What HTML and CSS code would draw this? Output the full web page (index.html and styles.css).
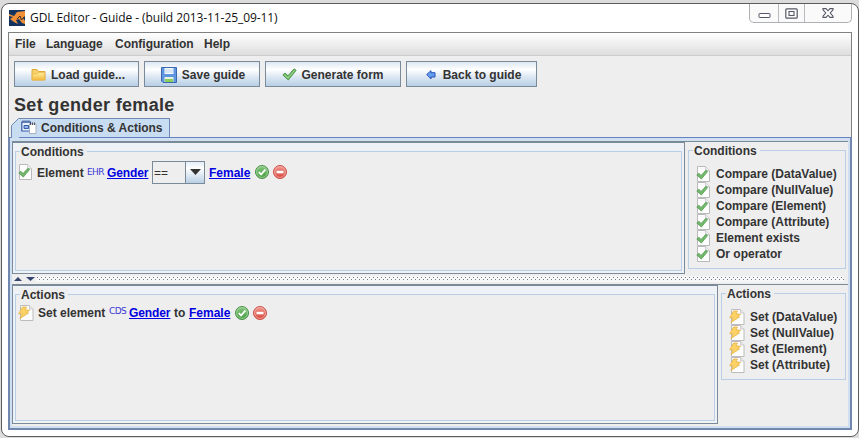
FILE: index.html
```html
<!DOCTYPE html>
<html lang="en">
<head>
<meta charset="utf-8">
<title>GDL Editor</title>
<link rel="stylesheet" href="styles.css">
</head>
<body>
<svg class="defs" width="0" height="0">
  <defs>
    <linearGradient id="green" x1="0" y1="0" x2="0" y2="1"><stop offset="0" stop-color="#8cc983"/><stop offset="1" stop-color="#3f9a3c"/></linearGradient>
    <linearGradient id="red" x1="0" y1="0" x2="0" y2="1"><stop offset="0" stop-color="#f09a90"/><stop offset="1" stop-color="#d8433a"/></linearGradient>
    <linearGradient id="gold" x1="0" y1="0" x2="0" y2="1"><stop offset="0" stop-color="#fff0a0"/><stop offset="1" stop-color="#f3b83a"/></linearGradient>
    <symbol id="page-check" viewBox="0 0 15 16">
      <path d="M1.500.5h8l4 4v11h-12z" fill="#fdfdfd" stroke="#b9b9b9"/><path d="M9.500.5v4h4" fill="#eee" stroke="#ccc"/>
      <path d="M.8 9l2-1.800 2.200 2.300 4.900-5.200 1.700 1.300-6.300 7.500z" fill="#72b86c" stroke="#559a52" stroke-width=".8"/>
    </symbol>
    <symbol id="page-bolt" viewBox="0 0 16 16">
      <path d="M2.500.5h9l3.500 3.500v11.500H2.500z" fill="#fdfdfd" stroke="#bcbcbc"/><path d="M11.500.5v3.500H15" fill="#eee" stroke="#ccc"/>
      <path d="M4.500 2h4L7.200 5h4.300L8.800 8h1.700L2 13.500l2.200-4.700H.7z" fill="#fbd263" stroke="#e3ae3c" stroke-width=".7"/>
    </symbol>
    <symbol id="accept" viewBox="0 0 14 14">
      <circle cx="7" cy="7" r="6.500" fill="url(#green)" stroke="#4b8f49"/><circle cx="7" cy="7" r="5.400" fill="none" stroke="#b5deb0" stroke-width=".7"/>
      <path d="M3.800 7.200l2.300 2.300 4.200-4.800" fill="none" stroke="#fff" stroke-width="1.800"/>
    </symbol>
    <symbol id="remove" viewBox="0 0 14 14">
      <circle cx="7" cy="7" r="6.500" fill="url(#red)" stroke="#ca5148"/><circle cx="7" cy="7" r="5.400" fill="none" stroke="#f6bcb6" stroke-width=".7"/>
      <rect x="3.500" y="5.800" width="7" height="2.500" fill="#fff"/>
    </symbol>
  </defs>
</svg>
<div class="window">
  <header class="titlebar">
    <svg class="app-icon" width="16" height="16" viewBox="0 0 16 16"><path fill="#12325f" d="M0 0h16v16H0z"/><path fill="#f0913a" d="M0 4l5 2 3-4 8-1v5l-2 2 2 3v3l-3-1-3-4-3 1 2 4-4-2-4-3 3-2-4-1z"/><path d="M8 9l3-3 1.500 4L15 7" fill="none" stroke="#402c20"/></svg>
    <span class="title">GDL Editor - Guide - (build 2013-11-25_09-11)</span>
    <div class="controls">
      <span class="control"><svg width="13" height="6"><rect x="1" y=".5" width="11" height="4" rx=".5" fill="#fff" stroke="#555766"/></svg></span>
      <span class="control max"><svg width="13" height="11"><rect x=".8" y=".8" width="11.400" height="9.400" rx="1" fill="#fff" stroke="#555766" stroke-width="1.200"/><rect x="4" y="3.500" width="5" height="4" fill="#fff" stroke="#555766" stroke-width="1.100"/></svg></span>
      <span class="control close"><svg width="12" height="10"><path d="M1 .6h3l2 2.200 2-2.200h3v1.200L8.200 5 11 8.200v1.200H8L6 7.200 4 9.400H1V8.200L3.800 5 1 1.800z" fill="#fff" stroke="#555766" stroke-width="1.100"/></svg></span>
    </div>
  </header>
  <main class="content">
    <nav class="menubar"><span class="m-file">File</span><span class="m-lang">Language</span><span class="m-conf">Configuration</span><span>Help</span></nav>
    <div class="toolbar">
      <button class="load"><svg width="15" height="13" viewBox="0 0 15 13"><path d="M1 12V1.500h5l1.500 2H14V12z" fill="#f7d06a" stroke="#e0a83a"/><path d="M1.500 12V6h5l1-1.500h6V12z" fill="url(#gold)" stroke="#eeb94b" stroke-width=".7"/></svg>Load guide...</button>
      <button class="save"><svg width="16" height="16" viewBox="0 0 16 16"><path d="M.5.5h15v15H2l-1.500-1.500z" fill="#5f96df" stroke="#3a66b0"/><path fill="#f7fbff" d="M3.500 1h9v6h-9z"/><path d="M4 3h8M4 5h8" stroke="#bfd2ea"/><path fill="#e6f1e0" d="M3.500 10h9v5h-9z"/><path fill="#8bcf5c" d="M4 12h8v3H4z"/></svg>Save guide</button>
      <button class="generate"><svg width="15" height="13" viewBox="0 0 15 13"><path d="M.8 7l2.200-2 3 2.800L12 .8l2.200 1.500L6.300 12z" fill="#68b75f" stroke="#458b42" stroke-width=".8"/><path d="M2.200 6.800l3.900 3.200 6.400-7.700" fill="none" stroke="#a4d99a"/></svg>Generate form</button>
      <button class="back"><svg width="10" height="10" viewBox="0 0 10 10"><path d="M.7 4.500L5 .7v2h4v4.300H5v2z" fill="#659df0" stroke="#2852b4"/></svg>Back to guide</button>
    </div>
    <h1>Set gender female</h1>
    <div class="tabs">
      <svg class="tab-edge" width="8" height="20"><path d="M.5 20V7.500l7-7H8V20z" fill="#c8ddf2"/><path d="M.5 20V7.500l7-7H8" fill="none" stroke="#7187b4"/></svg>
      <div class="tab"><svg width="16" height="14" viewBox="0 0 16 14"><path d="M.8 2h8.700v9H.8z" fill="#e9f2ff" stroke="#385ca8" stroke-width="1.200"/><path d="M2 .2V3M4 .2V3M6 .2V3M8 .2V3" stroke="#254588" stroke-width=".8"/><path d="M3 5.500h4.500v3H3z" fill="#8fb1e7" stroke="#385ca8"/><path d="M8.500 4h6.500v9.500H8.500z" fill="#fff" stroke="#8e98a5" stroke-width=".7"/><path d="M9.500 2.500V5m2-2.500V5m2-2.500V5" stroke="#333" stroke-width=".8"/></svg>Conditions &amp; Actions</div>
    </div>
    <div class="tabpane">
      <section class="split conditions">
        <div class="editor"><div class="group">
          <div class="legend">Conditions</div>
          <div class="rule"><svg class="page"><use href="#page-check"/></svg><span class="word">Element</span><small>EHR</small><a class="first">Gender</a><div class="combo"><span>==</span><i><svg width="11" height="6"><path d="M0 0h11L5.500 6z" fill="#333"/></svg></i></div><a>Female</a><svg class="round"><use href="#accept"/></svg><svg class="round second"><use href="#remove"/></svg></div>
        </div></div>
        <aside class="group palette">
          <div class="legend">Conditions</div>
          <ul>
            <li><svg><use href="#page-check"/></svg>Compare (DataValue)</li>
            <li><svg><use href="#page-check"/></svg>Compare (NullValue)</li>
            <li><svg><use href="#page-check"/></svg>Compare (Element)</li>
            <li><svg><use href="#page-check"/></svg>Compare (Attribute)</li>
            <li><svg><use href="#page-check"/></svg>Element exists</li>
            <li><svg><use href="#page-check"/></svg>Or operator</li>
          </ul>
        </aside>
      </section>
      <div class="divider"><svg width="23" height="6"><path d="M1 5h8L5 1zM13 1h9l-4.500 4z" fill="#35456f"/></svg><span class="grip"></span></div>
      <section class="split actions">
        <div class="editor"><div class="group">
          <div class="legend">Actions</div>
          <div class="rule"><svg class="page bolt"><use href="#page-bolt"/></svg><span class="word">Set element</span><small>CDS</small><a class="first">Gender</a><span class="to">to</span><a>Female</a><svg class="round"><use href="#accept"/></svg><svg class="round second"><use href="#remove"/></svg></div>
        </div></div>
        <aside class="group palette">
          <div class="legend">Actions</div>
          <ul>
            <li><svg><use href="#page-bolt"/></svg>Set (DataValue)</li>
            <li><svg><use href="#page-bolt"/></svg>Set (NullValue)</li>
            <li><svg><use href="#page-bolt"/></svg>Set (Element)</li>
            <li><svg><use href="#page-bolt"/></svg>Set (Attribute)</li>
          </ul>
        </aside>
      </section>
    </div>
  </main>
</div>
</body>
</html>
```
FILE: styles.css
```css
* { box-sizing: border-box; }
body { margin: 0; height: 438px; overflow: hidden; padding: 3px 0 0 1px; background: #dcdcdc; font: bold 12px/14px "Liberation Sans", Arial, sans-serif; color: #333; }
svg { display: block; flex: none; }
.defs { position: absolute; }
.window { width: 858px; height: 434px; border: 1px solid #5c5c5c; border-radius: 8px; background: #fff; padding: 0 6px; }
.titlebar { height: 28px; display: flex; align-items: flex-start; }
.app-icon { margin: 6px 0 0 1px; }
.title { margin: 6px 0 0 5px; font: 12px/16px "Open Sans", "Noto Sans", sans-serif; letter-spacing: -.08px; color: #111; white-space: nowrap; }
.controls { margin-left: auto; width: 103px; height: 19px; display: flex; border: 1px solid #aeb0b3; border-top: 0; border-radius: 0 0 5px 5px; background: #fafafa; }
.control { width: 28px; display: flex; justify-content: center; padding-top: 9px; }
.control.max { width: 27px; padding-top: 4px; border: solid #b8babd; border-width: 0 1px; }
.control.close { flex: 1; padding-top: 4px; }
.content { width: 844px; height: 398px; border: 1px solid #808080; border-bottom: 0; background: #eee; }
.menubar { height: 23px; display: flex; padding: 4px 6px 0; background: linear-gradient(#fff, #dedede); border-bottom: 1px solid #ccc; }
.m-file { width: 31px; }
.m-lang { width: 69px; }
.m-conf { width: 89px; }
.toolbar { height: 31px; padding: 5px 0 0 5px; display: flex; gap: 5px; }
button { height: 26px; padding: 1px 0 0; display: flex; align-items: center; justify-content: center; gap: 4px; border: 1px solid #7a8a99; border-radius: 0; color: #333; font: inherit; background: linear-gradient(#dde8f3 0%, #fff 32%, #dce7f3 62%, #b8cfe5 100%); }
.load { width: 125px; gap: 5px; padding-left: 3px; }
.save { width: 116px; gap: 5px; padding-left: 2px; }
.generate { width: 136px; }
.back { width: 131px; gap: 7px; padding-left: 4px; }
h1 { margin: 7px 0 0 5px; height: 23px; font-size: 18px; line-height: 22px; letter-spacing: .33px; white-space: nowrap; }
.tabs { height: 19px; margin: 1px 0 0 2px; display: flex; }
.tab { width: 151px; display: flex; gap: 4px; padding: 1px 0 0 2px; background: #c8ddf2; border: solid #7187b4; border-width: 1px 1px 0 0; white-space: nowrap; line-height: 17px; }
.tabpane { width: 844px; height: 293px; margin-left: -1px; border: 2px solid #7187ad; border-top: 1px solid #6382bf; padding: 3px 2px; background: #d0e0f0; }
.split { display: flex; background: #eee; }
.conditions { height: 133px; border-top: 1px solid #7a8a99; }
.editor { border: 1px solid #7a8a99; padding: 8px 2px 2px; background: #eef1f6; }
.conditions .editor { width: 673px; height: 132px; }
.group { border: 1px solid #b8cfe5; background: #eee; }
.editor .group { height: 100%; padding-left: 4px; }
.legend { width: max-content; margin-top: -7px; background: #eee; padding: 0 3px 0 1px; }
.rule { display: flex; align-items: center; height: 24px; margin-top: 1px; white-space: nowrap; margin-left: -2px; }
.page { width: 15px; height: 16px; }
.page.bolt { width: 16px; }
.word { width: 50px; margin-left: 4px; }
.conditions .word, .conditions a { padding-top: 1px; }
.rule small { width: 20px; font: 9px/10px "DejaVu Sans", sans-serif; letter-spacing: -.65px; color: #3939d5; }
a { color: #0000e0; text-decoration: underline; text-underline-offset: 1px; width: 46px; }
a.first { width: 45px; letter-spacing: -.1px; }
.combo { width: 53px; height: 23px; display: flex; border: 1px solid #7a8a99; margin-right: 4px; font-weight: normal; }
.combo span { flex: 1; padding: 4px 1px; }
.combo i { width: 19px; border-left: 1px solid #7a8a99; display: flex; align-items: center; justify-content: center; background: linear-gradient(#e3edf7, #fff 30%, #b8cfe5); }
.round { width: 14px; height: 14px; }
.second { margin-left: 4px; }
.palette { padding-left: 4px; }
.conditions .palette { width: 158px; height: 119px; margin: 8px 0 0 3px; }
ul { list-style: none; padding: 0; margin: 8px 0 0 3px; }
li { display: flex; height: 16px; line-height: 16px; gap: 5px; white-space: nowrap; }
li svg { width: 15px; height: 16px; }
.divider { height: 10px; background: #eee; padding: 2px 4px 0 1px; display: flex; }
.grip { flex: 1; height: 6px; background-color: #f7f7f7; background-image: radial-gradient(circle at 1.5px 1.5px, #707a88 .7px, transparent .9px), radial-gradient(circle at 3.5px 3.5px, #707a88 .7px, transparent .9px); background-size: 4px 6px; background-repeat: repeat-x; }
.actions { height: 142px; border-top: 1px solid #7a8a99; }
.actions .editor { width: 706px; height: 139px; }
.actions .rule { margin-top: -1px; }
.actions .word { width: 71px; margin-left: 4px; }
.to { width: 15px; }
.actions .rule small { position: relative; top: -2px; }
.actions .palette { width: 125px; height: 87px; margin: 8px 0 0 3px; }
.actions li svg { width: 16px; }
```
